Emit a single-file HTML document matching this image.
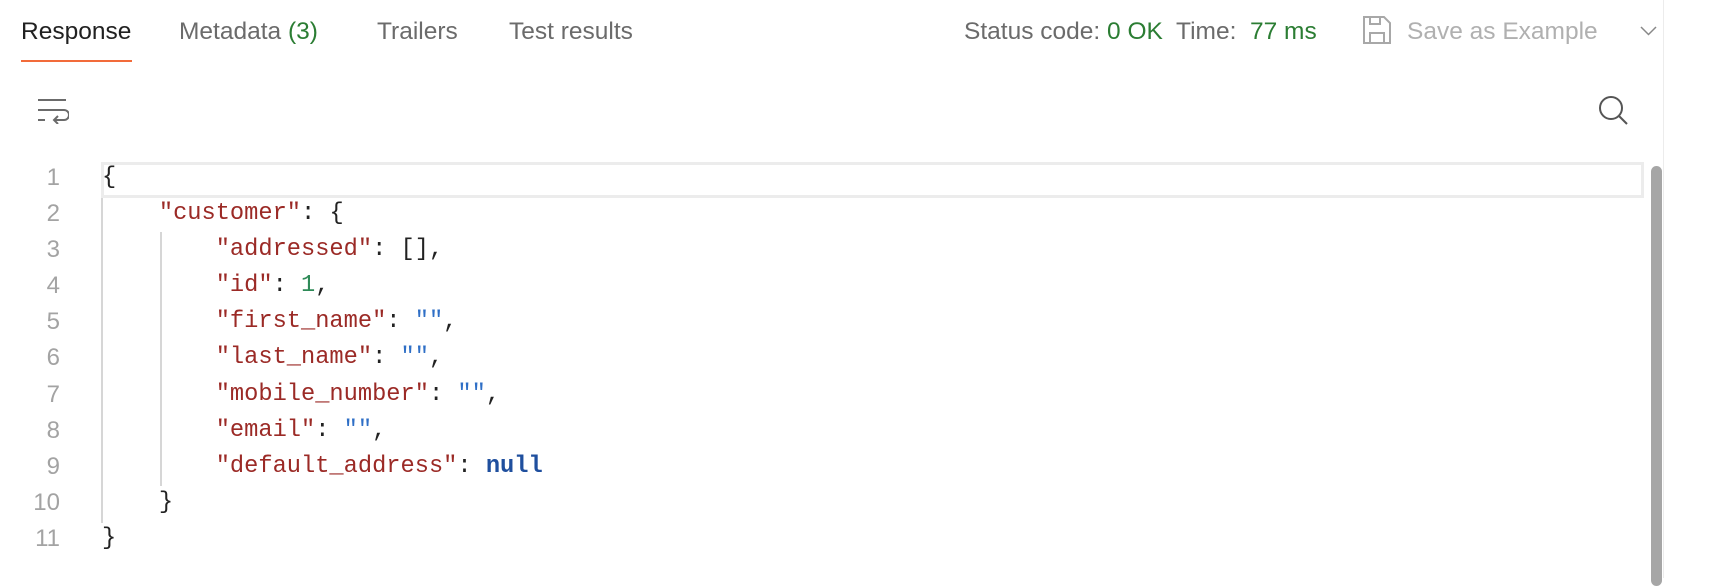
<!DOCTYPE html>
<html><head><meta charset="utf-8"><style>
body{margin:0;width:1714px;height:578px;background:#fff;position:relative;overflow:hidden;font-family:"Liberation Sans",sans-serif}
.t{position:absolute;top:18px;font-size:24.5px;color:#6b6b6b;white-space:nowrap}
.g{color:#2b7d33}
.code{position:absolute;left:102px;top:160px;font-family:"Liberation Mono",monospace;font-size:23.7px;line-height:36.1px;white-space:pre;color:#222}
.ln{position:absolute;left:0;width:60px;top:160px;font-family:"Liberation Sans",sans-serif;font-size:24px;line-height:36.1px;text-align:right;color:#a3a3a3}
.k{color:#9b2a26}.s{color:#2f6fc6}.n{color:#2e8a57}.nu{color:#1f4f9e;font-weight:bold}
</style></head><body>
<div class="t" style="left:21px;color:#212121">Response</div>
<div style="position:absolute;left:21px;top:60px;width:111px;height:2px;background:#f26b3a"></div>
<div class="t" style="left:179px">Metadata <span class="g">(3)</span></div>
<div class="t" style="left:377px">Trailers</div>
<div class="t" style="left:509px">Test results</div>
<div class="t" style="left:964px">Status code: <span class="g">0 OK</span>&nbsp; Time: &nbsp;<span class="g">77 ms</span></div>
<svg style="position:absolute;left:1362px;top:15px" width="30" height="30" viewBox="0 0 30 30" fill="none" stroke="#a8a8a8" stroke-width="2"><path d="M2 2h20l6 6v20H2z"/><path d="M8 2v7h10V2"/><path d="M8 28v-10h14v10"/></svg>
<div class="t" style="left:1407px;color:#b0b0b0">Save as Example</div>
<svg style="position:absolute;left:1640px;top:26px" width="17" height="10" viewBox="0 0 17 10" fill="none" stroke="#888" stroke-width="1.5"><path d="M1 1l7.5 7.5L16 1"/></svg>
<div style="position:absolute;left:1663px;top:0;width:1px;height:578px;background:#ececec"></div>
<svg style="position:absolute;left:37px;top:98px" width="32" height="26" viewBox="0 0 32 26" fill="none" stroke="#6b6b6b" stroke-width="2"><path d="M1 2h28M1 12h26M1 22h7"/><path d="M27 12a5 5 0 0 1 0 10h-9"/><path d="M21 18l-4 4 4 4"/></svg>
<svg style="position:absolute;left:1598px;top:95px" width="32" height="32" viewBox="0 0 32 32" fill="none" stroke="#555" stroke-width="2"><circle cx="13" cy="13" r="11"/><path d="M21 21l8 8"/></svg>
<div style="position:absolute;left:101px;top:162px;width:1537px;height:30px;border:3px solid #ececec"></div>
<div style="position:absolute;left:1651px;top:166px;width:11px;height:420px;background:#a6a6a6;border-radius:6px"></div>
<div style="position:absolute;left:101px;top:198px;width:2px;height:325px;background:#d6d6d6"></div>
<div style="position:absolute;left:160px;top:232px;width:2px;height:254px;background:#d6d6d6"></div>
<div class="ln">1<br>2<br>3<br>4<br>5<br>6<br>7<br>8<br>9<br>10<br>11</div>
<div class="code">{
    <span class="k">"customer"</span>: {
        <span class="k">"addressed"</span>: [],
        <span class="k">"id"</span>: <span class="n">1</span>,
        <span class="k">"first_name"</span>: <span class="s">""</span>,
        <span class="k">"last_name"</span>: <span class="s">""</span>,
        <span class="k">"mobile_number"</span>: <span class="s">""</span>,
        <span class="k">"email"</span>: <span class="s">""</span>,
        <span class="k">"default_address"</span>: <span class="nu">null</span>
    }
}</div>
</body></html>
